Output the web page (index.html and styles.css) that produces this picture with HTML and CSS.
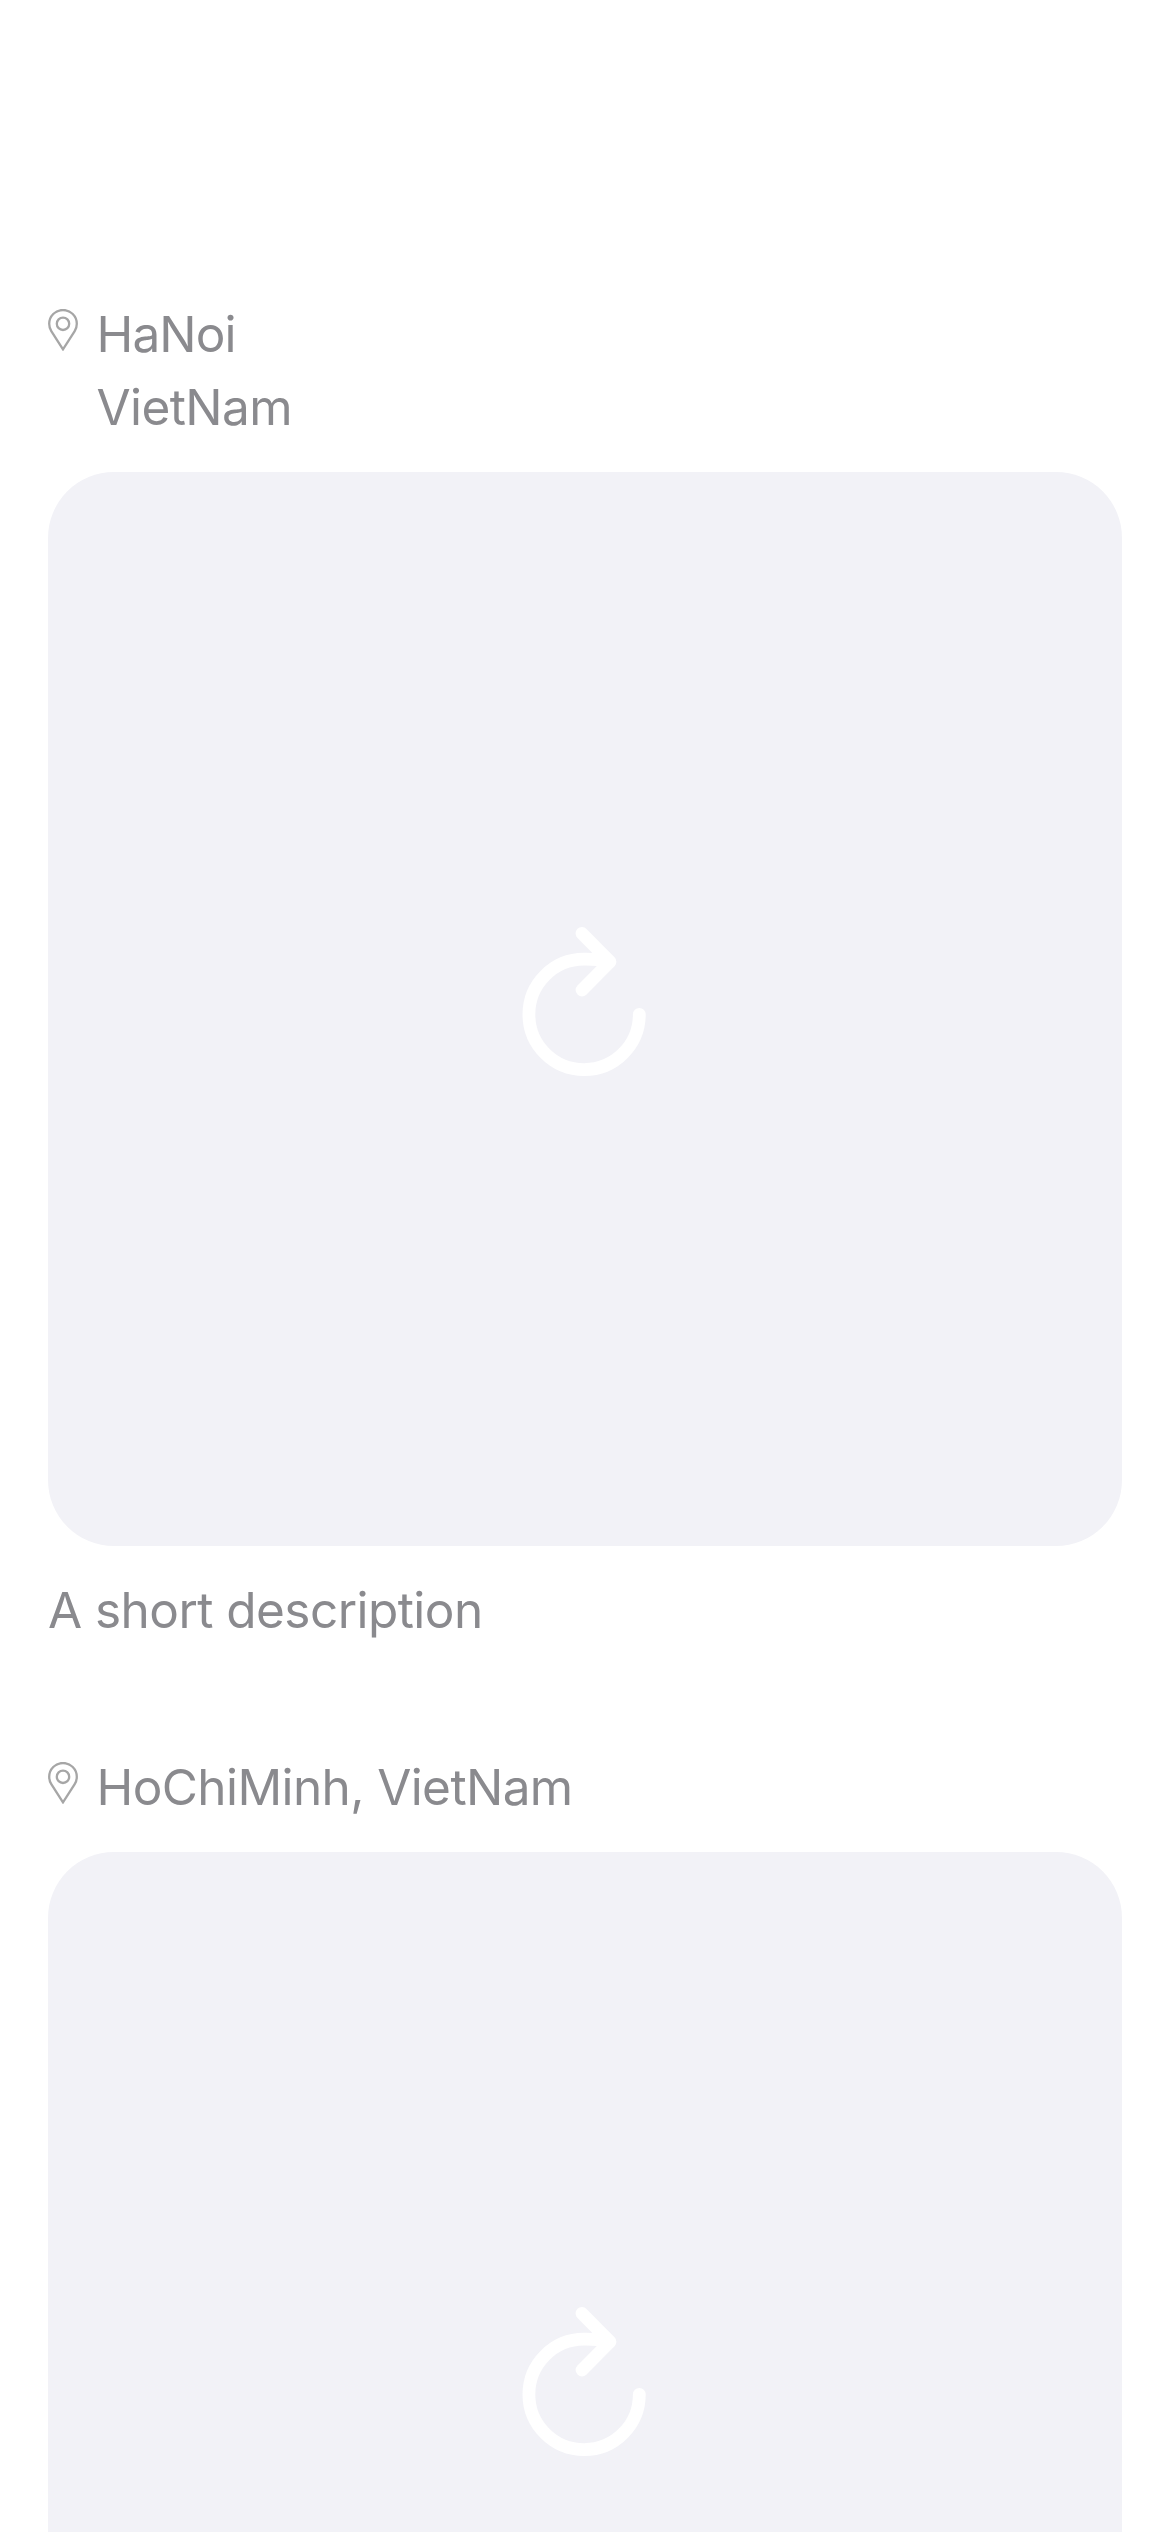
FILE: index.html
```html
<!DOCTYPE html>
<html lang="en">
<head>
<meta charset="utf-8">
<title>Places</title>
<link rel="stylesheet" href="styles.css">
</head>
<body>
<main class="feed">
  <article class="post">
    <header class="place">
      <svg class="pin" viewBox="0 0 30 42"><path d="M15 40.3L3.3 22.2C1.8 19.8 1.2 17.5 1.2 14.8a13.8 13.8 0 0 1 27.6 0c0 2.7-.6 5-2.1 7.4Z"/><circle cx="15" cy="14.8" r="6.2"/></svg>
      <div class="place-name"><div class="line city">HaNoi</div><div class="line country">VietNam</div></div>
    </header>
    <div class="photo">
      <svg class="reload" viewBox="0 0 124 150"><path d="M117.3 87.3A55.2 55.2 0 1 1 62 32.2Q75 32 87.5 34.5M60 6.4L88 34.7L60 63"/></svg>
    </div>
    <p class="line caption">A short description</p>
  </article>
  <article class="post">
    <header class="place">
      <svg class="pin" viewBox="0 0 30 42"><path d="M15 40.3L3.3 22.2C1.8 19.8 1.2 17.5 1.2 14.8a13.8 13.8 0 0 1 27.6 0c0 2.7-.6 5-2.1 7.4Z"/><circle cx="15" cy="14.8" r="6.2"/></svg>
      <div class="place-name"><div class="line full">HoChiMinh, VietNam</div></div>
    </header>
    <div class="photo">
      <svg class="reload" viewBox="0 0 124 150"><path d="M117.3 87.3A55.2 55.2 0 1 1 62 32.2Q75 32 87.5 34.5M60 6.4L88 34.7L60 63"/></svg>
    </div>
  </article>
</main>
</body>
</html>
```
FILE: styles.css
```css
body {
  margin: 0;
  background: #fff;
}

.feed {
  box-sizing: border-box;
  height: 2532px;
  overflow: hidden;
  padding: 298px 48px 0;
  display: flex;
  flex-direction: column;
  gap: 104px;
}

.post {
  flex: none;
}

.place {
  display: flex;
  align-items: flex-start;
  gap: 18.5px;
  padding-bottom: 28px;
}

.pin {
  width: 30px;
  height: 42px;
  margin-top: 11px;
  fill: none;
  stroke: #a6a6a6;
  stroke-width: 2.3;
}

.line {
  margin: 0;
  font: 400 49.5px/73px Inter, sans-serif;
  color: #8a8a8e;
  white-space: nowrap;
}

.city {
  letter-spacing: -0.9px;
}

.country {
  letter-spacing: -0.6px;
}

.full {
  letter-spacing: -0.6px;
}

.caption {
  margin-top: 28px;
  letter-spacing: -0.55px;
}

.photo {
  display: flex;
  justify-content: center;
  height: 1074px;
  border-radius: 66px;
  background: #f2f2f7;
}

.reload {
  width: 124px;
  height: 150px;
  margin: 455px 2px 0 0;
  fill: none;
  stroke: #fff;
  stroke-width: 12.8;
  stroke-linecap: round;
  stroke-linejoin: round;
}
```
